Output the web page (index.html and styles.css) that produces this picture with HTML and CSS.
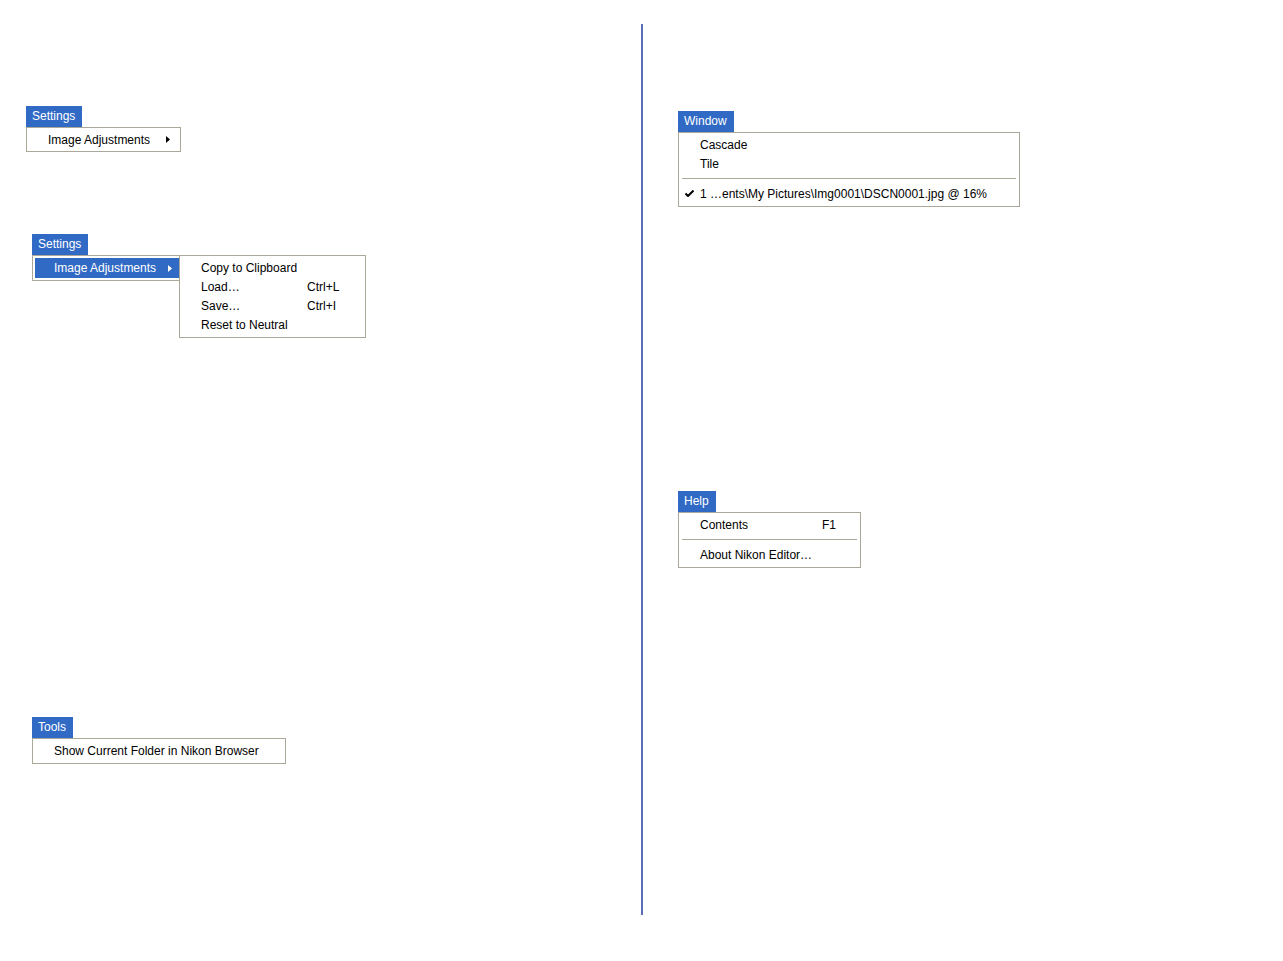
FILE: index.html
```html
<!DOCTYPE html>
<html lang="en">
<head>
<meta charset="utf-8">
<title>Nikon Editor menus</title>
<link rel="stylesheet" href="styles.css">
</head>
<body>
<div class="page">
  <div class="col col-left">
    <div class="menu menu-settings-a">
      <div class="menu-title">Settings</div>
      <div class="menu-list w155">
        <div class="item has-sub">
          <span class="gutter"></span>
          <span class="label">Image Adjustments</span>
          <svg class="arrow" width="4" height="7" viewBox="0 0 4 7"><path d="M0 0 L4 3.5 L0 7 Z" fill="#000"/></svg>
        </div>
      </div>
    </div>

    <div class="menu menu-settings-b">
      <div class="menu-title">Settings</div>
      <div class="menu-list w151 anchor">
        <div class="item has-sub active">
          <span class="gutter"></span>
          <span class="label">Image Adjustments</span>
          <svg class="arrow" width="4" height="7" viewBox="0 0 4 7"><path d="M0 0 L4 3.5 L0 7 Z" fill="#fff"/></svg>
        </div>
        <div class="menu-list submenu">
          <div class="item"><span class="gutter"></span><span class="label lw106">Copy to Clipboard</span></div>
          <div class="item"><span class="gutter"></span><span class="label lw106">Load…</span><span class="key">Ctrl+L</span></div>
          <div class="item"><span class="gutter"></span><span class="label lw106">Save…</span><span class="key">Ctrl+I</span></div>
          <div class="item"><span class="gutter"></span><span class="label lw106">Reset to Neutral</span></div>
        </div>
      </div>
    </div>

    <div class="menu menu-tools">
      <div class="menu-title">Tools</div>
      <div class="menu-list w254">
        <div class="item tall"><span class="gutter"></span><span class="label">Show Current Folder in Nikon Browser</span></div>
      </div>
    </div>
  </div>

  <div class="col col-right">
    <div class="menu menu-window">
      <div class="menu-title">Window</div>
      <div class="menu-list w342 pb3">
        <div class="item"><span class="gutter"></span><span class="label">Cascade</span></div>
        <div class="item"><span class="gutter"></span><span class="label">Tile</span></div>
        <div class="sep"></div>
        <div class="item">
          <span class="gutter">
            <svg class="check" width="9" height="7" viewBox="0 0 9 7"><path d="M0.5 3.5 L3 6 L8.5 0.5" fill="none" stroke="#000" stroke-width="2"/></svg>
          </span>
          <span class="label">1 …ents\My Pictures\Img0001\DSCN0001.jpg @ 16%</span>
        </div>
      </div>
    </div>

    <div class="menu menu-help">
      <div class="menu-title">Help</div>
      <div class="menu-list w183 pb3">
        <div class="item"><span class="gutter"></span><span class="label lw122">Contents</span><span class="key">F1</span></div>
        <div class="sep"></div>
        <div class="item"><span class="gutter"></span><span class="label">About Nikon Editor…</span></div>
      </div>
    </div>
  </div>
</div>
</body>
</html>
```

FILE: styles.css
```css
html, body {
  margin: 0;
  padding: 0;
  background: #fff;
}

body {
  font-family: "Liberation Sans", Arial, sans-serif;
  font-size: 12px;
  color: #000;
}

.page {
  display: flex;
  align-items: flex-start;
  width: 1283px;
  height: 961px;
}

.col-left {
  width: 641px;
  flex: none;
  display: flex;
  flex-direction: column;
  align-items: flex-start;
}

.col-right {
  margin-top: 24px;
  height: 891px;
  border-left: 2px solid #5b6fb8;
  flex: none;
  display: flex;
  flex-direction: column;
  align-items: flex-start;
  padding-left: 35px;
  box-sizing: border-box;
}

/* menu blocks */
.menu {
  display: flex;
  flex-direction: column;
  align-items: flex-start;
}

.menu-settings-a { margin: 106px 0 0 26px; }
.menu-settings-b { margin: 82px 0 0 32px; }
.menu-tools      { margin: 436px 0 0 32px; }
.menu-window     { margin-top: 87px; }
.menu-help       { margin-top: 284px; }

.menu-title {
  height: 21px;
  line-height: 21px;
  padding: 0 7px 0 6px;
  background: #316ac5;
  color: #fff;
}

.menu-list {
  border: 1px solid #aca899;
  background: #fff;
  padding: 2px;
  box-sizing: border-box;
}

.pb3 { padding-bottom: 3px; }

.w155 { width: 155px; }
.w151 { width: 151px; }
.w254 { width: 254px; }
.w342 { width: 342px; }
.w183 { width: 183px; }

.anchor { position: relative; }

.submenu {
  position: absolute;
  left: 146px;
  top: -1px;
  width: 187px;
  padding-bottom: 3px;
}

/* menu items */
.item {
  display: flex;
  align-items: center;
  height: 19px;
  white-space: nowrap;
}

.item.tall { height: 20px; }

.item.active {
  height: 20px;
  background: #316ac5;
  color: #fff;
}

.gutter {
  flex: none;
  width: 19px;
  height: 100%;
  display: flex;
  align-items: center;
  padding-left: 4px;
  box-sizing: border-box;
}

.label { flex: none; }
.lw106 { width: 106px; }
.lw122 { width: 122px; }

.key { flex: none; }

.has-sub .arrow {
  margin-left: auto;
  margin-right: 8px;
  flex: none;
}

.sep {
  height: 1px;
  background: #aca899;
  margin: 5px 1px 5px;
}
```
